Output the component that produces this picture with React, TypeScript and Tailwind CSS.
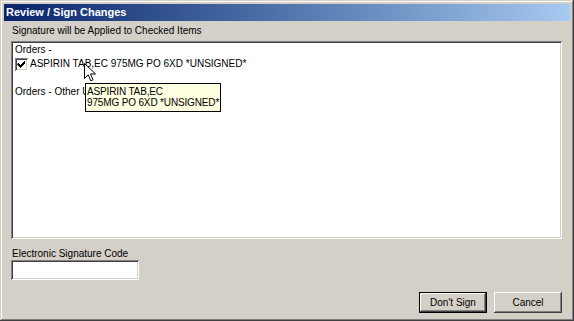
const raised =
  "shadow-[inset_-1px_-1px_#404040,inset_1px_1px_#ffffff,inset_-2px_-2px_#808080,inset_2px_2px_#d4d0c8]";
const sunken =
  "shadow-[inset_1px_1px_#808080,inset_-1px_-1px_#ffffff,inset_2px_2px_#404040,inset_-2px_-2px_#d4d0c8]";

const CheckBox = () => (
  <div className={`w-[13px] h-[13px] bg-white shrink-0 ${sunken} flex items-center justify-center`}>
    <svg width="13" height="13" viewBox="0 0 13 13">
      <path d="M3 5h1v1h1v1h1v-1h1v-1h1v-1h1v-1h1v3h-1v1h-1v1h-1v1h-1v1h-1v-1h-1v-1h-1v-1h-1z" fill="#000" />
    </svg>
  </div>
);

const Cursor = () => (
  <svg className="absolute left-[84px] top-[63px]" width="13" height="20" viewBox="0 0 13 20">
    <path
      d="M0.5 0.5 L0.5 15.5 L4.2 11.8 L6.8 17.8 L9 16.8 L6.5 11 L11.5 11 Z"
      fill="#fff"
      stroke="#000"
      strokeWidth="1"
      strokeLinejoin="miter"
    />
  </svg>
);

const Button = ({ label, isDefault }: { label: string; isDefault?: boolean }) => (
  <div className={`w-[68px] h-[21px] ${isDefault ? "border border-black" : ""}`}>
    <div className={`w-full h-full bg-[#d4d0c8] flex items-center justify-center ${raised}`}>
      <span className="leading-[13px]">{label}</span>
    </div>
  </div>
);

export default function App() {
  return (
    <div
      className="relative w-[574px] h-[321px] bg-[#d4d0c8] text-[10px] text-black overflow-hidden shadow-[inset_-1px_-1px_#404040,inset_1px_1px_#d4d0c8,inset_-2px_-2px_#808080,inset_2px_2px_#ffffff]"
      style={{ fontFamily: '"Liberation Sans", Arial, sans-serif' }}
    >
      {/* title bar */}
      <div className="mx-[4px] mt-[4px] h-[17px] bg-gradient-to-r from-[#0a246a] to-[#a6caf0] flex items-center pl-[2px]">
        <span className="text-white font-bold text-[11px] leading-[13px]">Review / Sign Changes</span>
      </div>

      <div className="pl-[11px] pr-[12px] flex flex-col">
        <div className="mt-[3px] h-[13px] leading-[13px] pl-[1px]">Signature will be Applied to Checked Items</div>

        {/* check list */}
        <div className={`relative mt-[4px] h-[198px] bg-white p-[2px] ${sunken}`}>
          <div className="flex flex-col">
            <div className="h-[14px] leading-[14px] pl-[2px]">Orders -</div>
            <div className="h-[14px] flex items-center gap-[2px] pl-[2px]">
              <CheckBox />
              <span className="leading-[14px]">ASPIRIN TAB,EC 975MG PO 6XD *UNSIGNED*</span>
            </div>
            <div className="h-[14px]" />
            <div className="h-[14px] leading-[14px] pl-[2px]">Orders - Other Unsigned</div>
          </div>

          {/* tooltip */}
          <div className="absolute left-[74px] top-[42px] bg-[#ffffe1] border border-black pl-[1px] pr-[1px] pt-[2px] pb-[3px] leading-[11px] whitespace-nowrap tracking-[-0.15px]">
            <div>ASPIRIN TAB,EC</div>
            <div>975MG PO 6XD *UNSIGNED*</div>
          </div>
        </div>

        <div className="mt-[8px] h-[13px] leading-[13px] pl-[1px]">Electronic Signature Code</div>
        <div className={`w-[128px] h-[20px] bg-white ${sunken}`} />

        <div className="mt-[12px] flex justify-end gap-[7px]">
          <Button label="Don't Sign" isDefault />
          <Button label="Cancel" />
        </div>
      </div>

      <Cursor />
    </div>
  );
}
